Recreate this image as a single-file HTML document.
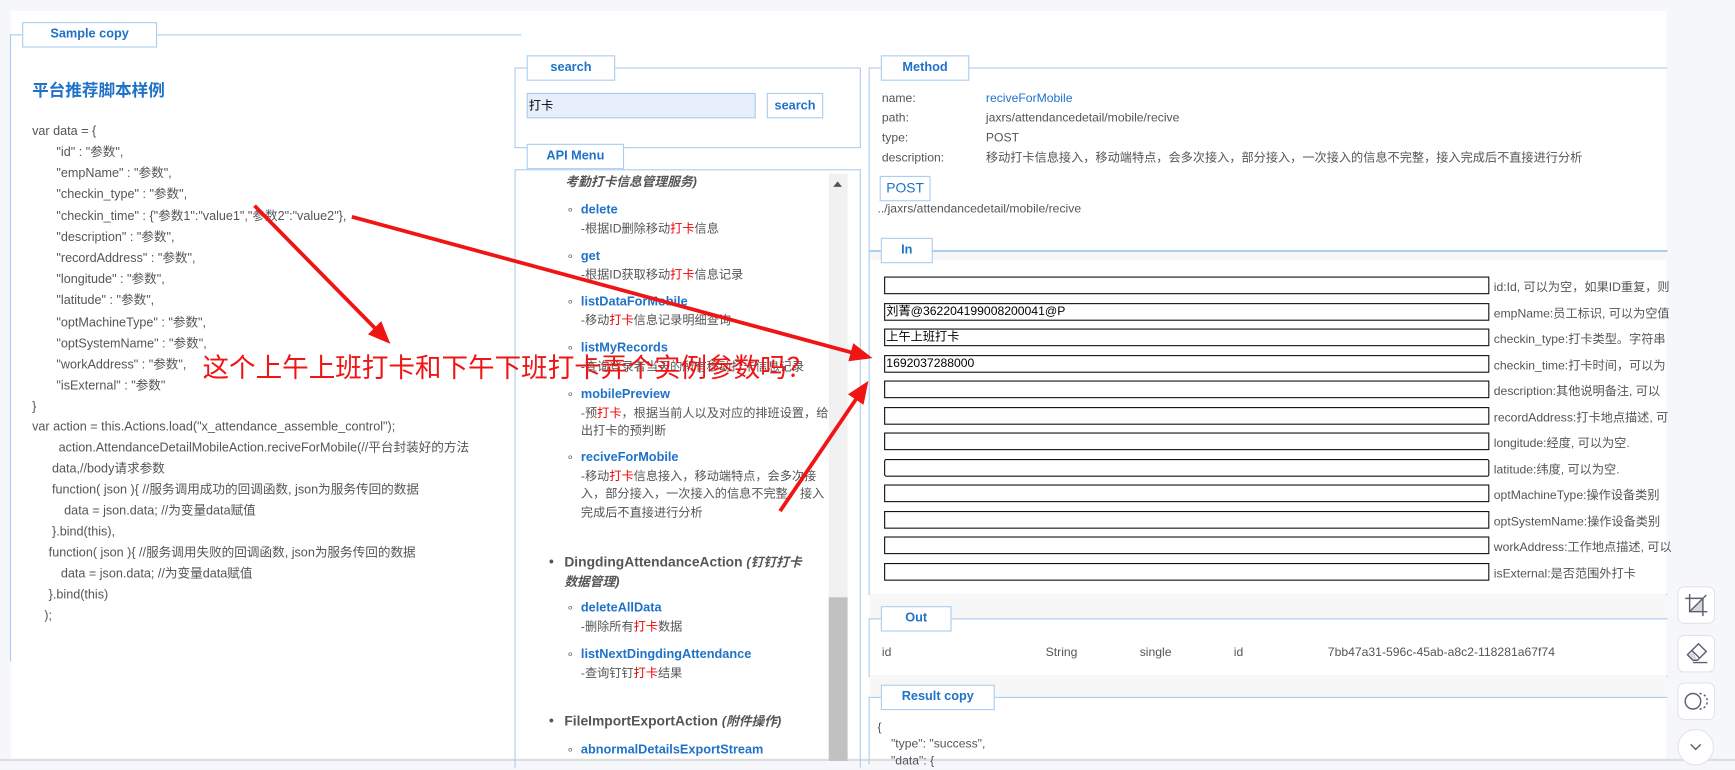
<!DOCTYPE html>
<html><head><meta charset="utf-8">
<style>
html,body{margin:0;padding:0;width:1735px;height:761px;overflow:hidden;background:#f6f7fb;}
#w{position:absolute;left:0;top:0;width:1568px;height:688px;transform:scale(1.1065,1.1061);transform-origin:0 0;font-family:"Liberation Sans","Noto Sans CJK SC",sans-serif;color:#555;font-size:11px;}
.a{position:absolute;white-space:nowrap;}
.fs{position:absolute;border:1px solid #a9cdf0;border-bottom:none;border-right:none;}
.lg{position:absolute;background:#fff;border:1px solid #a9cdf0;color:#1f72c8;font-weight:bold;font-size:11.5px;text-align:center;line-height:21px;height:21px;}
.in{position:absolute;left:799px;width:544px;height:14px;border:1px solid #111;background:#fff;font-size:11px;color:#000;line-height:14px;padding-left:1px;}
.lb{position:absolute;left:1350px;font-size:11px;color:#555;}
.nm{color:#1f72c8;font-weight:bold;font-size:11.5px;}
.r{color:#e00;}
.tb{position:absolute;left:1516px;width:32px;height:32px;border:1px solid #e2e4ea;border-radius:6px;background:#fff;}
</style></head><body><div id="w">
<div class="a" style="left:10px;top:10px;width:1496px;height:678px;background:#fff;"></div>
<div class="a" style="left:0;top:686px;width:1568px;height:2px;background:#ddd;"></div>

<div class="fs" style="left:9px;top:31px;width:461px;height:566px;border-right:none;"></div>
<div class="lg" style="left:20px;top:20px;width:120px;">Sample copy</div>
<div class="a" style="left:29px;top:71px;font-size:15px;font-weight:bold;color:#1f72c8;">平台推荐脚本样例</div>
<div class="a" style="left:0;top:0;font-size:11.4px;color:#555;line-height:19.2px;">
<div class="a" style="left:29px;top:110px;">var data = {</div>
<div class="a" style="left:51px;top:129px;">"id" : "参数",<br>"empName" : "参数",<br>"checkin_type" : "参数",<br>"checkin_time" : {"参数1":"value1","参数2":"value2"},<br>"description" : "参数",<br>"recordAddress" : "参数",<br>"longitude" : "参数",<br>"latitude" : "参数",<br>"optMachineType" : "参数",<br>"optSystemName" : "参数",<br>"workAddress" : "参数",<br>"isExternal" : "参数"</div>
<div class="a" style="left:29px;top:359px;">}</div>
<div class="a" style="left:29px;top:377px;">var action = this.Actions.load("x_attendance_assemble_control");</div>
<div class="a" style="left:53px;top:396px;">action.AttendanceDetailMobileAction.reciveForMobile(//平台封装好的方法</div>
<div class="a" style="left:47px;top:415px;">data,//body请求参数</div>
<div class="a" style="left:47px;top:434px;">function( json ){ //服务调用成功的回调函数, json为服务传回的数据</div>
<div class="a" style="left:58px;top:453px;">data = json.data; //为变量data赋值</div>
<div class="a" style="left:47px;top:472px;">}.bind(this),</div>
<div class="a" style="left:44px;top:491px;">function( json ){ //服务调用失败的回调函数, json为服务传回的数据</div>
<div class="a" style="left:55px;top:510px;">data = json.data; //为变量data赋值</div>
<div class="a" style="left:44px;top:529px;">}.bind(this)</div>
<div class="a" style="left:40px;top:548px;">);</div>
</div>

<div class="fs" style="left:465px;top:61px;width:311px;height:71px;border-right:1px solid #a9cdf0;border-bottom:1px solid #a9cdf0;"></div>
<div class="lg" style="left:476px;top:50px;width:78px;">search</div>
<div class="a" style="left:476px;top:84px;width:207px;height:23px;background:#e6effb;border:1px solid #a9cdf0;color:#000;font-size:11px;line-height:23px;padding-left:1px;box-sizing:border-box;">打卡</div>
<div class="a" style="left:693px;top:84px;width:51px;height:23px;border:1px solid #a9cdf0;color:#1f72c8;font-weight:bold;font-size:11.5px;line-height:22px;text-align:center;box-sizing:border-box;">search</div>

<div class="fs" style="left:465px;top:153px;width:311px;height:540px;border-right:1px solid #a9cdf0;"></div>
<div class="lg" style="left:476px;top:130px;width:86px;">API Menu</div>
<div class="a" style="left:749px;top:157px;width:17px;height:531px;background:#f1f1f1;"></div>
<div class="a" style="left:749px;top:540px;width:17px;height:148px;background:#c1c1c1;"></div>
<div class="a" style="left:753px;top:164px;width:0;height:0;border-left:4px solid transparent;border-right:4px solid transparent;border-bottom:5px solid #555;"></div>
<div class="a" style="left:0;top:0;line-height:16.5px;">
<div class="a" style="left:511px;top:157px;font-weight:bold;font-style:italic;font-size:11.5px;color:#555;">考勤打卡信息管理服务)</div>
<div class="a" style="left:512px;top:182px;">∘</div><div class="a" style="left:525px;top:182px;"><span class="nm">delete</span><br>-根据ID删除移动<span class="r">打卡</span>信息</div>
<div class="a" style="left:512px;top:224px;">∘</div><div class="a" style="left:525px;top:224px;"><span class="nm">get</span><br>-根据ID获取移动<span class="r">打卡</span>信息记录</div>
<div class="a" style="left:512px;top:265px;">∘</div><div class="a" style="left:525px;top:265px;"><span class="nm">listDataForMobile</span><br>-移动<span class="r">打卡</span>信息记录明细查询</div>
<div class="a" style="left:512px;top:307px;">∘</div><div class="a" style="left:525px;top:307px;"><span class="nm">listMyRecords</span><br>-查询登录者当天的所有移动打卡信息记录</div>
<div class="a" style="left:512px;top:349px;">∘</div><div class="a" style="left:525px;top:349px;"><span class="nm">mobilePreview</span><br>-预<span class="r">打卡</span>，根据当前人以及对应的排班设置，给<br>出打卡的预判断</div>
<div class="a" style="left:512px;top:406px;">∘</div><div class="a" style="left:525px;top:406px;"><span class="nm">reciveForMobile</span><br>-移动<span class="r">打卡</span>信息接入，移动端特点，会多次接<br>入，部分接入，一次接入的信息不完整，接入<br>完成后不直接进行分析</div>
<div class="a" style="left:496px;top:500px;font-size:13px;">•</div>
<div class="a" style="left:510px;top:500px;font-weight:bold;font-size:12.5px;color:#555;">DingdingAttendanceAction <i style="font-size:11.5px">(钉钉打卡</i><br><i style="font-size:11.5px">数据管理)</i></div>
<div class="a" style="left:512px;top:542px;">∘</div><div class="a" style="left:525px;top:542px;"><span class="nm">deleteAllData</span><br>-删除所有<span class="r">打卡</span>数据</div>
<div class="a" style="left:512px;top:584px;">∘</div><div class="a" style="left:525px;top:584px;"><span class="nm">listNextDingdingAttendance</span><br>-查询钉钉<span class="r">打卡</span>结果</div>
<div class="a" style="left:496px;top:644px;font-size:13px;">•</div>
<div class="a" style="left:510px;top:644px;font-weight:bold;font-size:12.5px;color:#555;">FileImportExportAction <i style="font-size:11.5px">(附件操作)</i></div>
<div class="a" style="left:512px;top:670px;">∘</div><div class="a" style="left:525px;top:670px;"><span class="nm">abnormalDetailsExportStream</span></div>
</div>

<div class="fs" style="left:785px;top:61px;width:721px;height:165px;border-bottom:1px solid #a9cdf0;"></div>
<div class="lg" style="left:796px;top:50px;width:78px;">Method</div>
<div class="a" style="left:797px;top:80px;line-height:18px;">name:<br>path:<br>type:<br>description:</div>
<div class="a" style="left:891px;top:80px;line-height:18px;"><span style="color:#1f72c8">reciveForMobile</span><br>jaxrs/attendancedetail/mobile/recive<br>POST<br>移动打卡信息接入，移动端特点，会多次接入，部分接入，一次接入的信息不完整，接入完成后不直接进行分析</div>
<div class="a" style="left:795px;top:159px;width:44px;height:21px;border:1px solid #a9cdf0;color:#1f72c8;font-size:12.5px;line-height:21px;text-align:center;">POST</div>
<div class="a" style="left:793px;top:183px;">../jaxrs/attendancedetail/mobile/recive</div>
<div class="a" style="left:785px;top:228px;width:721px;height:7px;background:#f7f7f8;"></div>

<div class="fs" style="left:785px;top:226px;width:721px;height:310px;border-bottom:1px solid #a9cdf0;"></div>
<div class="lg" style="left:796px;top:215px;width:45px;">In</div>
<div class="in" style="top:250px;"></div><div class="lb a" style="top:251px;">id:Id, 可以为空，如果ID重复，则</div>
<div class="in" style="top:274px;">刘菁@362204199008200041@P</div><div class="lb a" style="top:275px;">empName:员工标识, 可以为空值</div>
<div class="in" style="top:297px;">上午上班打卡</div><div class="lb a" style="top:298px;">checkin_type:打卡类型。字符串</div>
<div class="in" style="top:321px;">1692037288000</div><div class="lb a" style="top:322px;">checkin_time:打卡时间，可以为</div>
<div class="in" style="top:344px;"></div><div class="lb a" style="top:345px;">description:其他说明备注, 可以</div>
<div class="in" style="top:368px;"></div><div class="lb a" style="top:369px;">recordAddress:打卡地点描述, 可</div>
<div class="in" style="top:391px;"></div><div class="lb a" style="top:392px;">longitude:经度, 可以为空.</div>
<div class="in" style="top:415px;border-radius:2px;border-width:1.5px;"></div><div class="lb a" style="top:416px;">latitude:纬度, 可以为空.</div>
<div class="in" style="top:438px;"></div><div class="lb a" style="top:439px;">optMachineType:操作设备类别</div>
<div class="in" style="top:462px;"></div><div class="lb a" style="top:463px;">optSystemName:操作设备类别</div>
<div class="in" style="top:485px;"></div><div class="lb a" style="top:486px;">workAddress:工作地点描述, 可以</div>
<div class="in" style="top:509px;"></div><div class="lb a" style="top:510px;">isExternal:是否范围外打卡</div>
<div class="a" style="left:786px;top:537px;width:720px;height:23px;background:#f7f7f8;"></div>

<div class="fs" style="left:785px;top:559px;width:721px;height:51px;border-bottom:1px solid #a9cdf0;"></div>
<div class="lg" style="left:796px;top:548px;width:62px;">Out</div>
<div class="a" style="left:797px;top:584px;">id</div>
<div class="a" style="left:945px;top:584px;">String</div>
<div class="a" style="left:1030px;top:584px;">single</div>
<div class="a" style="left:1115px;top:584px;">id</div>
<div class="a" style="left:1200px;top:584px;">7bb47a31-596c-45ab-a8c2-118281a67f74</div>
<div class="a" style="left:786px;top:611px;width:720px;height:19px;background:#f7f7f8;"></div>

<div class="fs" style="left:785px;top:630px;width:721px;height:60px;"></div>
<div class="lg" style="left:796px;top:619px;width:101px;">Result copy</div>
<div class="a" style="left:793px;top:651px;line-height:15px;">{<br>&nbsp;&nbsp;&nbsp;&nbsp;"type": "success",<br>&nbsp;&nbsp;&nbsp;&nbsp;"data": {</div>

<div class="tb" style="top:530px;"><svg width="32" height="32" viewBox="0 0 32 32" fill="none" stroke="#5a6070" stroke-width="1.3"><path d="M10 22 L22 10 L22 22 Z" fill="#d6d8de" stroke="none"/><path d="M10 6 V22 H26 M6 10 H22 V26 M10 22 L25 7"/></svg></div>
<div class="tb" style="top:574px;"><svg width="32" height="32" viewBox="0 0 32 32" fill="none" stroke="#5a6070" stroke-width="1.3"><path d="M9 18 L13 22 L17 22 L13 14 Z" fill="#d6d8de" stroke="none"/><path d="M18 7 L25 14 L17 22 L13 22 L8 17 Z M12 13 L19 20 M13 24 H26"/></svg></div>
<div class="tb" style="top:617px;"><svg width="32" height="32" viewBox="0 0 32 32" fill="none" stroke="#5a6070" stroke-width="1.3"><path d="M19 9 A7 7 0 0 1 19 23 A7 7 0 0 0 19 9Z" fill="#d6d8de" stroke="none"/><circle cx="13" cy="16" r="7"/><path d="M19 9 A7 7 0 0 1 19 23" stroke-dasharray="2 2"/></svg></div>
<div class="a" style="left:1516px;top:659px;width:31px;height:31px;border:1px solid #e2e4ea;border-radius:50%;background:#fff;"><svg width="31" height="31" viewBox="0 0 31 31" fill="none" stroke="#5a6070" stroke-width="1.3"><path d="M11 13 L15.5 17.5 L20 13"/></svg></div>

<svg class="a" style="left:0;top:0" width="1568" height="688" viewBox="0 0 1568 688">
<defs><marker id="m" markerWidth="6" markerHeight="5" refX="4" refY="2.5" orient="auto" markerUnits="strokeWidth"><path d="M0 0 L6 2.5 L0 5 Z" fill="#f01414"/></marker></defs>
<g stroke="#f01414" stroke-width="3.4" fill="none" marker-end="url(#m)">
<line x1="230" y1="186" x2="348" y2="306"/>
<line x1="318" y1="196" x2="782" y2="322"/>
<line x1="705" y1="462" x2="781" y2="350"/>
</g>
</svg>
<div class="a" style="left:183px;top:313px;font-size:24px;color:#f01414;">这个上午上班打卡和下午下班打卡弄个实例参数吗？</div>
</div></body></html>
